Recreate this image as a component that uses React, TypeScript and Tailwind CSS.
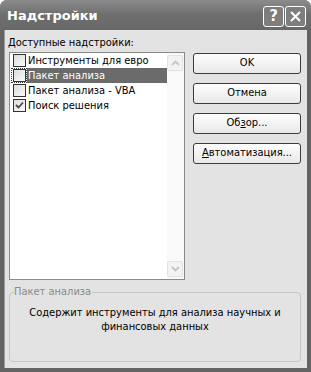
import React from "react";

const font = { fontFamily: '"DejaVu Sans Condensed", "Liberation Sans", Tahoma, sans-serif' };

const items = [
  { name: "Инструменты для евро", checked: false },
  { name: "Пакет анализа", checked: false, selected: true },
  { name: "Пакет анализа - VBA", checked: false },
  { name: "Поиск решения", checked: true },
];

function CheckBox({ checked }: { checked: boolean }) {
  return (
    <div className="w-[13px] h-[13px] border border-[#333] bg-gradient-to-br from-[#dcdcdc] to-[#fafafa] flex items-center justify-center">
      {checked && (
        <svg width="9" height="9" viewBox="0 0 9 9">
          <path d="M1 4 L3.5 6.5 L8 1.5" fill="none" stroke="#4a4a4a" strokeWidth="1.8" />
        </svg>
      )}
    </div>
  );
}

function Arrow({ up }: { up: boolean }) {
  return (
    <div className="w-[16px] h-[16px] rounded-[2px] border border-[#e2e2e2] bg-[#f3f3f3] flex items-center justify-center">
      <svg width="9" height="6" viewBox="0 0 9 6">
        <path
          d={up ? "M1 5 L4.5 1.5 L8 5" : "M1 1 L4.5 4.5 L8 1"}
          fill="none"
          stroke="#c4c4c4"
          strokeWidth="1.8"
        />
      </svg>
    </div>
  );
}

function Btn({ children }: { children: React.ReactNode }) {
  return (
    <div className="w-[108px] h-[21px] rounded-[3px] border border-[#3b3b3b] bg-gradient-to-b from-[#fefefe] to-[#e8e8e8] flex items-center justify-center text-[11px] text-black">
      {children}
    </div>
  );
}

export default function App() {
  return (
    <div
      className="w-[311px] h-[372px] bg-[#646464] rounded-t-[7px] flex flex-col overflow-hidden"
      style={font}
    >
      <div className="h-[30px] shrink-0 bg-gradient-to-b from-[#8c8c8c] via-[#6e6e6e] to-[#686868] flex items-center pl-[7px] pr-[5px]">
        <div
          className="text-white font-bold text-[13px] flex-1 mt-[1px]"
          style={{ fontFamily: '"DejaVu Sans", sans-serif' }}
        >
          Надстройки
        </div>
        <div className="flex gap-[1px] mt-[3px]">
          <div
            className="w-[21px] h-[21px] rounded-[3px] border border-white bg-[#7e7e7e] flex items-center justify-center text-white font-bold text-[15px] leading-none"
            style={{ fontFamily: '"DejaVu Sans", sans-serif', textShadow: "0 0 1px #555" }}
          >
            ?
          </div>
          <div className="w-[21px] h-[21px] rounded-[3px] border border-white bg-[#7e7e7e] flex items-center justify-center">
            <svg width="11" height="11" viewBox="0 0 11 11">
              <path d="M1 1 L10 10 M10 1 L1 10" stroke="white" strokeWidth="2" />
            </svg>
          </div>
        </div>
      </div>

      <div className="flex-1 mx-[4px] mb-[4px] bg-[#e3e3e3] border-l border-[#9a9a9a] pl-[4px] pt-[4px] text-[11px] text-black">
        <div className="h-[18px] leading-[18px] -ml-[1px]">
          <u>Д</u>оступные надстройки:
        </div>
        <div className="flex">
          <div className="w-[176px] h-[228px] border border-[#8a8a8a] bg-white flex">
            <div className="flex-1 flex flex-col">
              {items.map((it) => (
                <div key={it.name} className="h-[15px] flex items-center">
                  <div
                    className={
                      "w-[16px] h-[15px] flex items-center justify-center ml-[1px] " +
                      (it.selected ? "outline outline-1 outline-dotted outline-[#333] -outline-offset-1" : "")
                    }
                  >
                    <CheckBox checked={it.checked} />
                  </div>
                  <div
                    className={
                      "flex-1 h-[15px] leading-[15px] pl-[1px] " +
                      (it.selected ? "bg-[#6b6b6b] text-white" : "")
                    }
                  >
                    {it.name}
                  </div>
                </div>
              ))}
            </div>
            <div className="w-[17px] bg-[#f9f9f9] flex flex-col justify-between py-[2px]">
              <Arrow up />
              <Arrow up={false} />
            </div>
          </div>
          <div className="ml-[8px] mt-[1px] flex flex-col gap-[9px]">
            <Btn>OK</Btn>
            <Btn>Отмена</Btn>
            <Btn>
              <span>
                Об<u>з</u>ор...
              </span>
            </Btn>
            <Btn>
              <span>
                <u>А</u>втоматизация...
              </span>
            </Btn>
          </div>
        </div>
        <fieldset className="mt-[4px] w-[292px] h-[78px] border border-[#c4c4c4] rounded-[4px] px-[4px]">
          <legend className="text-[#8a8a8a] px-0 pr-[1px] text-[11px]">Пакет анализа</legend>
          <div className="text-center leading-[14px] mt-[5px]">
            Содержит инструменты для анализа научных и
            <br />
            финансовых данных
          </div>
        </fieldset>
      </div>
    </div>
  );
}
